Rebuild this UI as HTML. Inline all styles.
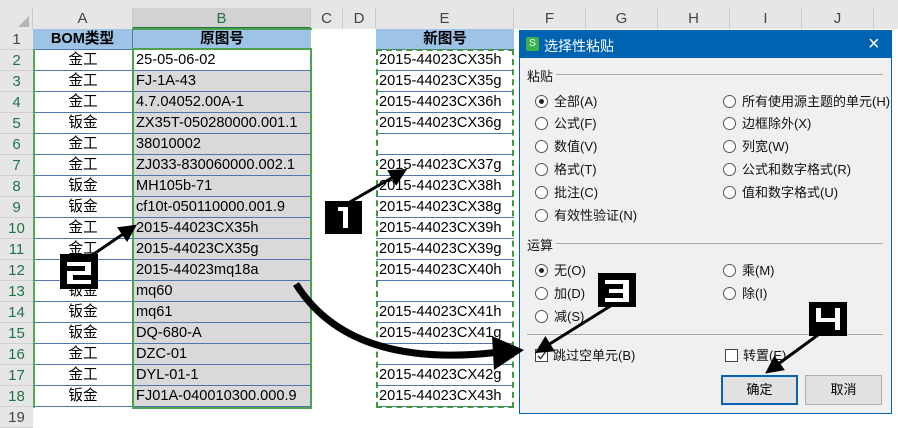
<!DOCTYPE html>
<html><head><meta charset="utf-8"><style>
*{margin:0;padding:0;box-sizing:border-box}
body{width:898px;height:420px;overflow:hidden;background:#fff;font-family:"Liberation Sans","Noto Sans CJK SC",sans-serif;position:relative}
.a{position:absolute}
.ch{position:absolute;top:8px;height:21px;background:#e6e6e6;border-right:1px solid #c8c8c8;color:#444;font-size:15px;text-align:center;line-height:21px}
.rh{position:absolute;left:0;width:33px;height:21px;background:#e6e6e6;border-bottom:1px solid #d0d0d0;color:#444;font-size:15px;text-align:center;line-height:21px}
.c{position:absolute;height:21px;font-size:14.6px;line-height:21px;white-space:nowrap;overflow:hidden;border-bottom:1px solid #4d77ad}
.d{font-size:13px;color:#111;position:absolute;white-space:nowrap}
.r{display:inline-block;width:13px;height:13px;border:1px solid #555;border-radius:50%;vertical-align:-2px;margin-right:6px;position:relative;background:#fff}
.r.on::after{content:"";position:absolute;left:3px;top:3px;width:5px;height:5px;border-radius:50%;background:#222}
.cb{display:inline-block;width:13px;height:13px;border:1px solid #444;vertical-align:-2px;margin-right:5px;background:#fff;position:relative}
</style></head><body>
<div class="a" style="left:0;top:0;width:898px;height:29px;background:#e6e6e6;border-bottom:1px solid #c8c8c8"></div>
<div class="a" style="left:0;top:8px;width:33px;height:21px;background:#e6e6e6;border-right:1px solid #c8c8c8"></div>
<div class="a" style="left:18px;top:16px;width:0;height:0;border-left:11px solid transparent;border-bottom:11px solid #b5b5b5"></div>
<div class="ch" style="left:33px;width:100px">A</div>
<div class="ch" style="left:133px;width:178px;background:#d2d2d2;color:#217346;border-bottom:2px solid #217346">B</div>
<div class="ch" style="left:311px;width:32px">C</div>
<div class="ch" style="left:343px;width:33px">D</div>
<div class="ch" style="left:376px;width:138px">E</div>
<div class="ch" style="left:514px;width:72px">F</div>
<div class="ch" style="left:586px;width:72px">G</div>
<div class="ch" style="left:658px;width:72px">H</div>
<div class="ch" style="left:730px;width:72px">I</div>
<div class="ch" style="left:802px;width:72px">J</div>
<div class="ch" style="left:874px;width:30px"></div>

<div id="rows"></div>
<script>
var A=["金工","金工","金工","钣金","金工","金工","钣金","钣金","金工","金工","金工","钣金","钣金","钣金","金工","金工","钣金"];
var B=["25-05-06-02","FJ-1A-43","4.7.04052.00A-1","ZX35T-050280000.001.1","38010002","ZJ033-830060000.002.1","MH105b-71","cf10t-050110000.001.9","2015-44023CX35h","2015-44023CX35g","2015-44023mq18a","mq60","mq61","DQ-680-A","DZC-01","DYL-01-1","FJ01A-040010300.000.9"];
var E=["2015-44023CX35h","2015-44023CX35g","2015-44023CX36h","2015-44023CX36g","","2015-44023CX37g","2015-44023CX38h","2015-44023CX38g","2015-44023CX39h","2015-44023CX39g","2015-44023CX40h","","2015-44023CX41h","2015-44023CX41g","","2015-44023CX42g","2015-44023CX43h"];
var h="";
for(var i=0;i<19;i++){var t=29+21*i;var g=(i>0&&i<18);
h+='<div class="rh" style="top:'+t+'px;color:'+(g?'#217346':'#444')+'">'+(i+1)+'</div>';}
h+='<div class="c" style="left:33px;top:29px;width:100px;background:#9dc3e6;text-align:center;font-weight:bold;border-right:1px solid #4d77ad">BOM类型</div>';
h+='<div class="c" style="left:133px;top:29px;width:178px;background:#9dc3e6;text-align:center;font-weight:bold">原图号</div>';
h+='<div class="c" style="left:376px;top:29px;width:138px;background:#9dc3e6;text-align:center;font-weight:bold">新图号</div>';
for(var i=0;i<17;i++){var t=50+21*i;
h+='<div class="c" style="left:33px;top:'+t+'px;width:100px;text-align:center">'+A[i]+'</div>';
h+='<div class="c" style="left:133px;top:'+t+'px;width:178px;padding-left:3px;background:'+(i==0?'#fff':'#d9d9d9')+'">'+B[i]+'</div>';
h+='<div class="c" style="left:376px;top:'+t+'px;width:138px;padding-left:3px">'+E[i]+'</div>';}
document.getElementById("rows").innerHTML=h;
</script>
<div class="a" style="left:33px;top:49px;width:2px;height:359px;background:#5aa35a"></div>
<div class="a" style="left:132px;top:48px;width:180px;height:361px;border:2px solid #4ea24e"></div>
<div class="a" style="left:132px;top:28px;width:180px;height:2px;background:#4ea24e"></div>
<div class="a" style="left:376px;top:49px;width:138px;height:359px;border:2px dashed #3e9a3e"></div>

<div class="a" style="left:519px;top:30px;width:373px;height:384px;background:#f0f0f0;border:1px solid #0063b1"></div>
<div class="a" style="left:519px;top:30px;width:373px;height:28px;background:#0063b1"></div>
<div class="a" style="left:526px;top:37px;width:13px;height:14px;background:#3ab14a;border-radius:2px;color:#fff;font-size:10px;text-align:center;line-height:14px">S</div>
<div class="d" style="left:544px;top:36px;color:#fff;font-size:14px">选择性粘贴</div>
<div class="d" style="left:868px;top:33px;color:#fff;font-size:20px">×</div>
<div class="d" style="left:527px;top:66px">粘贴</div>
<div class="a" style="left:556px;top:74px;width:327px;height:1px;background:#aaa"></div>
<div class="d" style="left:535px;top:91px"><span class="r on"></span>全部(A)</div>
<div class="d" style="left:535px;top:113px"><span class="r"></span>公式(F)</div>
<div class="d" style="left:535px;top:136px"><span class="r"></span>数值(V)</div>
<div class="d" style="left:535px;top:159px"><span class="r"></span>格式(T)</div>
<div class="d" style="left:535px;top:182px"><span class="r"></span>批注(C)</div>
<div class="d" style="left:535px;top:205px"><span class="r"></span>有效性验证(N)</div>
<div class="d" style="left:723px;top:91px"><span class="r"></span>所有使用源主题的单元(H)</div>
<div class="d" style="left:723px;top:113px"><span class="r"></span>边框除外(X)</div>
<div class="d" style="left:723px;top:136px"><span class="r"></span>列宽(W)</div>
<div class="d" style="left:723px;top:159px"><span class="r"></span>公式和数字格式(R)</div>
<div class="d" style="left:723px;top:182px"><span class="r"></span>值和数字格式(U)</div>
<div class="d" style="left:527px;top:235px">运算</div>
<div class="a" style="left:556px;top:243px;width:327px;height:1px;background:#aaa"></div>
<div class="d" style="left:535px;top:260px"><span class="r on"></span>无(O)</div>
<div class="d" style="left:535px;top:283px"><span class="r"></span>加(D)</div>
<div class="d" style="left:535px;top:306px"><span class="r"></span>减(S)</div>
<div class="d" style="left:723px;top:260px"><span class="r"></span>乘(M)</div>
<div class="d" style="left:723px;top:283px"><span class="r"></span>除(I)</div>
<div class="a" style="left:527px;top:334px;width:356px;height:1px;background:#aaa"></div>
<div class="d" style="left:535px;top:345px"><span class="cb"><svg width="11" height="11" style="position:absolute;left:0;top:0"><path d="M2 6 L4.5 8.5 L9.5 2" stroke="#222" stroke-width="1.3" fill="none"/></svg></span>跳过空单元(B)</div>
<div class="d" style="left:725px;top:345px"><span class="cb"></span>转置(E)</div>
<div class="a" style="left:721px;top:375px;width:77px;height:30px;background:#e1e1e1;border:2px solid #0a64b4;font-size:13px;text-align:center;line-height:26px">确定</div>
<div class="a" style="left:805px;top:375px;width:77px;height:30px;background:#e1e1e1;border:1px solid #adadad;font-size:13px;text-align:center;line-height:28px">取消</div>

<svg class="a" style="left:0;top:0" width="898" height="420">
<defs><marker id="m" markerWidth="6" markerHeight="6" refX="4" refY="3" orient="auto"><path d="M0 0 L6 3 L0 6z" fill="#000"/></marker></defs>
<g stroke="#000" stroke-width="3" fill="none" marker-end="url(#m)">
<line x1="343" y1="206" x2="402" y2="172"/>
<line x1="82" y1="262" x2="132" y2="228"/>
<line x1="612" y1="305" x2="540" y2="350"/>
<line x1="822" y1="332" x2="770" y2="370"/>
</g>
<path d="M296 284 Q350 370 500 352" stroke="#000" stroke-width="7" fill="none"/>
<path d="M492 336 L524 350 L494 370 z" fill="#000"/>
<rect x="325" y="201" width="37" height="33" fill="#000"/>
<rect x="60" y="254" width="38" height="35" fill="#000"/>
<rect x="598" y="273" width="38" height="34" fill="#000"/>
<rect x="809" y="302" width="38" height="34" fill="#000"/>
<g fill="#fff">
<rect x="343" y="207" width="5" height="21"/>
<rect x="338" y="207" width="6" height="4"/>
<path d="M67 262 h24 v13 h-18 v5 h18 v4 h-24 v-13 h18 v-5 h-18z"/>
<path d="M605 280 h24 v22 h-24 v-4 h18 v-5 h-14 v-4 h14 v-5 h-18z"/>
<path d="M816 308 h5 v10 h14 v-10 h5 v22 h-5 v-8 h-19z"/>
</g>
</svg>
</body></html>
